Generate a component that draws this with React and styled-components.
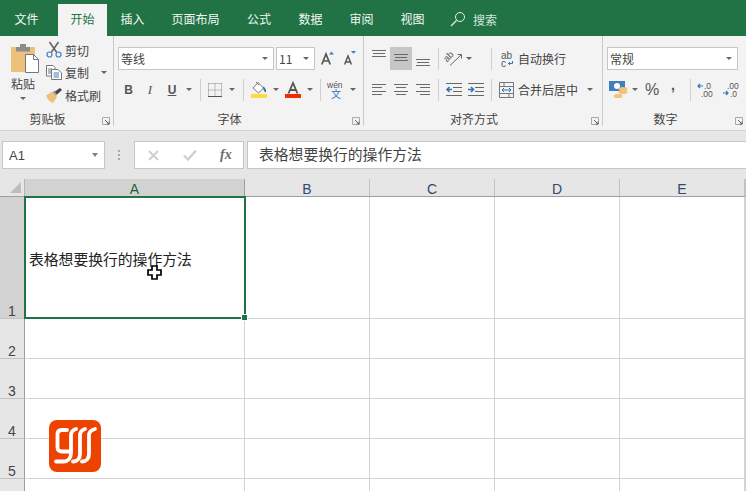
import React from "react";
import styled, { createGlobalStyle } from "styled-components";

const GlobalStyle = createGlobalStyle`
  html, body { margin: 0; padding: 0; background: #fff; }
  body { font-family: "Noto Sans CJK SC", "Liberation Sans", sans-serif; color: #333; }
  svg { overflow: visible; }
`;

const Page = styled.div`
  position: relative;
  width: 746px;
  height: 491px;
  overflow: hidden;
`;

/* title bar + tabs */
const TabBar = styled.div`
  display: flex;
  align-items: flex-end;
  height: 36px;
  padding-left: 1px;
  background: #217346;
`;

const Tab = styled.div`
  height: 32px;
  line-height: 30px;
  font-size: 12px;
  width: ${(p) => p.$w}px;
  text-align: center;
  padding-right: ${(p) => p.$pr || 0}px;
  box-sizing: border-box;
  color: ${(p) => (p.$active ? "#217346" : "#f4f8f5")};
  background: ${(p) => (p.$active ? "#f3f3f3" : "transparent")};
`;

const Search = styled.div`
  display: flex;
  align-items: center;
  gap: 7px;
  height: 32px;
  margin-left: 12px;
  font-size: 12px;
  color: #d6e6dc;
  padding-bottom: 2px;
  box-sizing: border-box;
`;

/* ribbon */
const Ribbon = styled.div`
  display: flex;
  height: 94px;
  background: #f3f3f3;
  border-bottom: 1px solid #d2d2d2;
`;

const Group = styled.div`
  position: relative;
  display: flex;
  flex-direction: column;
  width: ${(p) => p.$w}px;
  padding: 4px 0 0 ${(p) => p.$pad || 0}px;
  box-sizing: border-box;
  border-right: ${(p) => (p.$last ? "none" : "1px solid #c9c9c9")};
  margin-bottom: 4px;
`;

const GroupLabel = styled.div`
  position: absolute;
  left: 0;
  right: 18px;
  bottom: -1px;
  text-align: center;
  font-size: 12px;
  line-height: 16px;
  color: #444;
`;

const Launcher = styled.svg`
  position: absolute;
  right: 3px;
  bottom: 1px;
  width: 8px;
  height: 8px;
`;

const ToolRow = styled.div`
  display: flex;
  align-items: center;
  height: 23px;
  margin-top: ${(p) => p.$mt || 0}px;
`;

const Slot = styled.div`
  display: flex;
  align-items: center;
  justify-content: ${(p) => (p.$end ? "flex-end" : "center")};
  flex: none;
  width: ${(p) => p.$w}px;
  height: 23px;
  background: ${(p) => (p.$on ? "#c6c6c6" : "transparent")};
`;

const Divider = styled.div`
  flex: none;
  width: 1px;
  height: 22px;
  margin: 0 ${(p) => p.$m || 0}px;
  background: #d0d0d0;
`;

const Caret = styled.div`
  flex: none;
  width: 0;
  height: 0;
  margin: ${(p) => p.$m || "0"};
  border-left: ${(p) => (p.$big ? 3.5 : 3)}px solid transparent;
  border-right: ${(p) => (p.$big ? 3.5 : 3)}px solid transparent;
  border-top: ${(p) => (p.$big ? 4 : 3)}px solid ${(p) => (p.$big ? "#808080" : "#666")};
`;

const SelectBox = styled.div`
  display: flex;
  align-items: center;
  justify-content: space-between;
  flex: none;
  box-sizing: border-box;
  width: ${(p) => p.$w}px;
  height: 23px;
  margin-right: ${(p) => p.$mr || 0}px;
  padding: 0 5px 0 2px;
  background: #fff;
  border: 1px solid #c6c6c6;
  font-size: 12px;
  color: #444;
`;

const ClipRow = styled.div`
  display: flex;
  gap: 8px;
`;

const PasteCol = styled.div`
  display: flex;
  flex-direction: column;
  align-items: center;
  width: 30px;
  padding-top: 4px;
  font-size: 12px;
  line-height: 16px;
  color: #444;
`;

const PasteLabel = styled.span`
  margin-top: 3px;
`;

const ClipList = styled.div`
  display: flex;
  flex-direction: column;
  margin-top: -1px;
`;

const ClipItem = styled.div`
  display: flex;
  align-items: center;
  gap: 3px;
  height: 22.5px;
  font-size: 12px;
  color: #444;
`;

const ToolText = styled.span`
  margin-left: 4px;
  font-size: 12px;
  color: #444;
  white-space: nowrap;
`;

const Letter = styled.span`
  font-family: ${(p) => (p.$serif ? '"Liberation Serif", serif' : '"Liberation Sans", sans-serif')};
  font-size: ${(p) => p.$size || 12}px;
  font-weight: ${(p) => (p.$bold ? 700 : 400)};
  font-style: ${(p) => (p.$italic ? "italic" : "normal")};
  text-decoration: ${(p) => (p.$under ? "underline" : "none")};
  color: #555;
  line-height: 1;
`;

const Comma = styled(Letter)`
  padding-bottom: 9px;
`;

/* formula bar */
const FormulaBar = styled.div`
  display: flex;
  align-items: center;
  height: 48px;
  padding: 0 0 0 2px;
  box-sizing: border-box;
  background: #e6e6e6;
`;

const NameBox = styled.div`
  display: flex;
  align-items: center;
  justify-content: space-between;
  box-sizing: border-box;
  width: 103px;
  height: 28px;
  padding: 0 6px 0 6px;
  background: #fff;
  border: 1px solid #c6c6c6;
  font-family: "Liberation Sans", sans-serif;
  font-size: 13px;
  color: #444;
`;

const Grip = styled.div`
  flex: none;
  width: 2px;
  height: 10px;
  margin: 0 14px 0 13px;
  background: repeating-linear-gradient(#aaa 0 2px, transparent 2px 4px);
`;

const FxBox = styled.div`
  display: flex;
  align-items: center;
  box-sizing: border-box;
  width: 110px;
  height: 28px;
  margin-right: 3px;
  padding-left: 13px;
  gap: 24px;
  background: #fff;
  border: 1px solid #c6c6c6;
`;

const FxLetter = styled(Letter)`
  margin-left: -1px;
  font-weight: 700;
  color: #6a6a6a;
`;

const FormulaInput = styled.div`
  flex: 1;
  box-sizing: border-box;
  height: 28px;
  padding-left: 11px;
  line-height: 24px;
  font-size: 14.8px;
  color: #444;
  background: #fff;
  border: 1px solid #c6c6c6;
  border-right: none;
`;

/* sheet */
const Sheet = styled.div`
  display: grid;
  grid-template-columns: 25px 220px repeat(4, 125px) 1fr;
  grid-template-rows: 18px 122px repeat(5, 40px);
  background: #fff;
`;

const Corner = styled.div`
  position: relative;
  background: #e6e6e6;
  border-right: 1px solid #b5b5b5;
  border-bottom: 1px solid #9e9e9e;
  box-sizing: border-box;
  &::after {
    content: "";
    position: absolute;
    right: 3px;
    bottom: 3px;
    border-left: 11px solid transparent;
    border-bottom: 11px solid #bdbdbd;
  }
`;

const ColHead = styled.div`
  box-sizing: border-box;
  text-align: center;
  font-family: "Liberation Sans", sans-serif;
  font-size: 14px;
  line-height: 21px;
  color: ${(p) => (p.$on ? "#1f5e3a" : "#2f4a6a")};
  background: ${(p) => (p.$on ? "#d2d2d2" : "#e6e6e6")};
  border-right: 1px solid ${(p) => (p.$on ? "#9e9e9e" : "#c2c2c2")};
  border-bottom: 1px solid #9e9e9e;
  overflow: hidden;
`;

const RowHead = styled.div`
  display: flex;
  align-items: flex-end;
  justify-content: center;
  box-sizing: border-box;
  font-family: "Liberation Sans", sans-serif;
  font-size: 14px;
  line-height: 14px;
  color: #444;
  background: ${(p) => (p.$on ? "#d2d2d2" : "#e6e6e6")};
  border-right: 1px solid #9e9e9e;
  border-bottom: 1px solid #c2c2c2;
`;

const Cell = styled.div`
  box-sizing: border-box;
  border-right: 1px solid #d4d4d4;
  border-bottom: 1px solid #d4d4d4;
`;

const ActiveCell = styled.div`
  position: relative;
  display: flex;
  align-items: flex-end;
  box-sizing: border-box;
  margin: -1px 0 0 -1px;
  width: 222px;
  height: 123px;
  padding: 0 0 47px 3px;
  font-size: 14.8px;
  line-height: 22px;
  color: #222;
  white-space: nowrap;
  border: 2px solid #217346;
  background: #fff;
  z-index: 2;
  &::after {
    content: "";
    position: absolute;
    right: -4px;
    bottom: -4px;
    width: 5px;
    height: 5px;
    background: #217346;
    border: 1px solid #fff;
  }
`;

const Pointer = styled.svg`
  position: absolute;
  left: 147px;
  top: 265px;
  z-index: 3;
`;

const Logo = styled.svg`
  position: absolute;
  left: 49px;
  top: 420px;
  z-index: 3;
`;

const LauncherIcon = () => (
  <Launcher viewBox="0 0 8 8">
    <path d="M.5 .5H7.5V7.5H.5Z" fill="none" stroke="#aaa" />
    <path d="M3 3L7 7M4.5 7H7V4.5" fill="none" stroke="#666" />
  </Launcher>
);

const Lines = ({ rows }) => (
  <svg width="22" height="21" viewBox="0 0 22 21">
    {rows.map(([x1, x2, y], i) => (
      <path key={i} d={`M${x1} ${y}H${x2}`} stroke="#6a6a6a" strokeWidth="1" />
    ))}
  </svg>
);

const PasteIcon = () => (
  <svg width="28" height="29" viewBox="0 0 28 29" style={{ marginLeft: 4 }}>
    <path d="M0 3H24V28H0Z" fill="#edc17c" />
    <path d="M5 3H19V7.5H5Z" fill="#8c8c8c" />
    <path d="M9 0H15V4H9Z" fill="#8c8c8c" />
    <path d="M14.5 10.5H22.5L27.5 15.5V28.5H14.5Z" fill="#fff" stroke="#777" />
    <path d="M22.5 10.5V15.5H27.5" fill="none" stroke="#777" />
  </svg>
);

const ScissorsIcon = () => (
  <svg width="16" height="16" viewBox="0 0 16 16" fill="none">
    <path d="M3.5 0L10.5 10M12.5 0L5.5 10" stroke="#666" strokeWidth="1.6" />
    <circle cx="3.5" cy="12.5" r="2.5" stroke="#3f7fbf" strokeWidth="1.2" />
    <circle cx="12.5" cy="12.5" r="2.5" stroke="#3f7fbf" strokeWidth="1.2" />
  </svg>
);

const CopyIcon = () => (
  <svg width="16" height="15" viewBox="0 0 16 15" fill="none">
    <path d="M.5 .5H7L9 2.5V11H.5Z" fill="#fff" stroke="#777" />
    <path d="M2 4H6M2 6H6M2 8H6" stroke="#777" />
    <path d="M5.5 4.5H12L15.5 8V14.5H5.5Z" fill="#fff" stroke="#777" />
    <path d="M7.5 8H13M7.5 10H13M7.5 12H13" stroke="#3f7fbf" />
  </svg>
);

const BrushIcon = () => (
  <svg width="16" height="15" viewBox="0 0 16 15">
    <path d="M0 7.5L6 3.5L11 9L7 15C4 14 1 11 0 7.5Z" fill="#edc17c" />
    <path d="M6.5 4L9 2.5L11.5 5.5L10 8Z" fill="#999" />
    <path d="M9 3.5L14 0L16 2L11 6.5Z" fill="#444" />
  </svg>
);

const BorderIcon = () => (
  <svg width="14" height="14" viewBox="0 0 14 14" fill="none">
    <path d="M.5 .5H13.5M.5 7H13.5M.5 .5V13.5M7 .5V13.5M13.5 .5V13.5" stroke="#888" strokeDasharray="1 1" />
    <path d="M0 13.5H14" stroke="#555" />
  </svg>
);

const FillIcon = () => (
  <svg width="16" height="17" viewBox="0 0 16 17">
    <path d="M7 1.5L12.5 7L7.5 12L2 7Z" fill="#fff" stroke="#777" />
    <path d="M5 1L8 4" stroke="#777" />
    <path d="M12 5.5C14.5 6.5 15.5 9 15 11.5C13.5 11.5 12.5 9 12 7Z" fill="#2f75b5" />
    <path d="M0 13H16V17H0Z" fill="#fadc3f" />
  </svg>
);

const FontColorIcon = () => (
  <svg width="16" height="17" viewBox="0 0 16 17" fill="none">
    <path d="M3.5 12.5L8 2L12.5 12.5M5.5 9H10.5" stroke="#555" strokeWidth="1.8" />
    <path d="M0 13H16V17H0Z" fill="#f02c00" />
  </svg>
);

const GrowIcon = ({ up }) => (
  <svg width="16" height="17" viewBox="0 0 16 17" fill="none">
    <path
      d={up ? "M.8 14.5L5 4L9.2 14.5M2.2 11H7.8" : "M1.6 14.5L5 6L8.4 14.5M3 12H7"}
      stroke="#555"
      strokeWidth={up ? 1.7 : 1.4}
    />
    <path d={up ? "M8 4.5L10.5 1.5L13 4.5Z" : "M8 1H13L10.5 3.8Z"} fill="#3f7fbf" />
  </svg>
);

const OrientIcon = () => (
  <svg width="18" height="17" viewBox="0 0 18 17" fill="none">
    <text x="0" y="10" transform="rotate(-45 4 9)" fontFamily="Liberation Sans" fontSize="9.5" fill="#555">ab</text>
    <path d="M5 15.5L16 5M12.5 4.5H16.5V8.5" stroke="#666" />
  </svg>
);

const IndentIcon = ({ right }) => (
  <svg width="16" height="13" viewBox="0 0 16 13" fill="none">
    <path d="M0 .5H16M7 4.5H16M7 8.5H16M0 12.5H16" stroke="#666" />
    <path d={right ? "M0 6.5H5M3 4L5.5 6.5L3 9" : "M6 6.5H1M3.5 4L1 6.5L3.5 9"} stroke="#2f75b5" strokeWidth="1.6" />
  </svg>
);

const WrapIcon = () => (
  <svg width="13" height="16" viewBox="0 0 13 16" fill="none">
    <text x="0" y="7.5" fontFamily="Liberation Sans" fontSize="10" fill="#555">ab</text>
    <text x="0" y="15.5" fontFamily="Liberation Sans" fontSize="10" fill="#555">c</text>
    <path d="M11.5 10V12.5H7.5M9 11L7.5 12.5L9 14" stroke="#2f75b5" />
  </svg>
);

const MergeIcon = () => (
  <svg width="15" height="16" viewBox="0 0 15 16" fill="none">
    <path d="M.5 .5H14.5V15.5H.5ZM.5 4.5H14.5M.5 11.5H14.5M5 .5V4.5M10 11.5V15.5" stroke="#777" />
    <path d="M3 8H12M5 6L3 8L5 10M10 6L12 8L10 10" stroke="#2f75b5" />
  </svg>
);

const CurrencyIcon = () => (
  <svg width="19" height="17" viewBox="0 0 19 17">
    <path d="M0 0H16V10H0Z" fill="#3f7fbf" />
    <circle cx="8" cy="5" r="3" fill="#fff" />
    <ellipse cx="14" cy="8" rx="4.5" ry="2" fill="#f1c27a" />
    <ellipse cx="14" cy="11" rx="4.5" ry="2" fill="#f1c27a" />
    <ellipse cx="9" cy="15" rx="4.5" ry="2" fill="#f1c27a" />
  </svg>
);

const DecimalIcon = ({ more }) => (
  <svg width="18" height="15" viewBox="0 0 18 15" fill="none">
    <text x={more ? 7 : 5} y="7" fontFamily="Liberation Sans" fontSize="8.5" fill="#555">{more ? ".0" : ".00"}</text>
    <text x={more ? 4 : 8} y="14.5" fontFamily="Liberation Sans" fontSize="8.5" fill="#555">{more ? ".00" : ".0"}</text>
    {more ? (
      <path d="M6 4H1M3 2L1 4L3 6" stroke="#2f75b5" strokeWidth="1.2" />
    ) : (
      <path d="M1 11H6M4 9L6 11L4 13" stroke="#2f75b5" strokeWidth="1.2" />
    )}
  </svg>
);

const tabs = [
  ["文件", 57, false, 6],
  ["开始", 49, true],
  ["插入", 51],
  ["页面布局", 75],
  ["公式", 52],
  ["数据", 51],
  ["审阅", 51],
  ["视图", 51],
];

const columns = ["B", "C", "D", "E"];

export default function App() {
  return (
    <Page>
      <GlobalStyle />
      <TabBar>
        {tabs.map(([name, w, active, pr]) => (
          <Tab key={name} $w={w} $active={active} $pr={pr}>{name}</Tab>
        ))}
        <Search>
          <svg width="16" height="16" viewBox="0 0 16 16" fill="none">
            <circle cx="10" cy="6" r="4.5" stroke="#e4efe8" />
            <path d="M6.5 9.5L1 15" stroke="#e4efe8" strokeWidth="1.3" />
          </svg>
          搜索
        </Search>
      </TabBar>

      <Ribbon>
        <Group $w={114} $pad={8}>
          <ClipRow>
            <PasteCol>
              <PasteIcon />
              <PasteLabel>粘贴</PasteLabel>
              <Caret $m="5px 0 0" />
            </PasteCol>
            <ClipList>
              <ClipItem><ScissorsIcon />剪切</ClipItem>
              <ClipItem><CopyIcon />复制<Caret $m="0 0 0 9px" /></ClipItem>
              <ClipItem><BrushIcon />格式刷</ClipItem>
            </ClipList>
          </ClipRow>
          <GroupLabel>剪贴板</GroupLabel>
          <LauncherIcon />
        </Group>

        <Group $w={250} $pad={4}>
          <ToolRow $mt={7}>
            <SelectBox $w={156} $mr={2}>等线<Caret /></SelectBox>
            <SelectBox $w={39} $mr={4}>11<Caret /></SelectBox>
            <Slot $w={20}><GrowIcon up /></Slot>
            <Slot $w={24}><GrowIcon /></Slot>
          </ToolRow>
          <ToolRow $mt={8}>
            <Slot $w={21}><Letter $bold>B</Letter></Slot>
            <Slot $w={22}><Letter $italic $serif $size={13}>I</Letter></Slot>
            <Slot $w={22}><Letter $bold $under>U</Letter></Slot>
            <Caret $m="0 8px 0 3px" />
            <Divider />
            <Slot $w={28}><BorderIcon /></Slot>
            <Caret $m="0 8px 0 0" />
            <Divider />
            <Slot $w={29}><FillIcon /></Slot>
            <Caret />
            <Slot $w={28}><FontColorIcon /></Slot>
            <Caret $m="0 7px 0 0" />
            <Divider />
            <Slot $w={29}>
              <svg width="20" height="19" viewBox="0 0 20 19">
                <text x="1" y="8" fontFamily="Liberation Sans" fontSize="8.5" fill="#555">wén</text>
                <text x="5" y="18" fontFamily="Noto Sans CJK SC" fontSize="10" fill="#2f75b5">文</text>
              </svg>
            </Slot>
            <Caret />
          </ToolRow>
          <GroupLabel>字体</GroupLabel>
          <LauncherIcon />
        </Group>

        <Group $w={239} $pad={4}>
          <ToolRow $mt={7}>
            <Slot $w={22}><Lines rows={[[4, 18, 2.5], [5, 17, 5.5], [4, 18, 8.5]]} /></Slot>
            <Slot $w={22} $on><Lines rows={[[4, 18, 6.5], [5, 17, 9.5], [4, 18, 12.5]]} /></Slot>
            <Slot $w={22}><Lines rows={[[4, 18, 11.5], [5, 17, 14.5], [4, 18, 17.5]]} /></Slot>
            <Divider $m={4} />
            <Slot $w={22}><OrientIcon /></Slot>
            <Caret $m="0 6px 0 1px" />
            <Slot $w={13} />
            <Divider />
            <Slot $w={22} $end><WrapIcon /></Slot>
            <ToolText>自动换行</ToolText>
          </ToolRow>
          <ToolRow $mt={8}>
            <Slot $w={22}><Lines rows={[[4, 18, 5.5], [4, 14, 8.5], [4, 18, 12.5], [4, 14, 15.5]]} /></Slot>
            <Slot $w={22}><Lines rows={[[4, 18, 5.5], [6, 16, 8.5], [4, 18, 12.5], [6, 16, 15.5]]} /></Slot>
            <Slot $w={22}><Lines rows={[[4, 18, 5.5], [8, 18, 8.5], [4, 18, 12.5], [8, 18, 15.5]]} /></Slot>
            <Divider $m={4} />
            <Slot $w={22}><IndentIcon /></Slot>
            <Slot $w={22}><IndentIcon right /></Slot>
            <Slot $w={4} />
            <Divider />
            <Slot $w={22} $end><MergeIcon /></Slot>
            <ToolText>合并后居中</ToolText>
            <Caret $m="0 0 0 9px" />
          </ToolRow>
          <GroupLabel>对齐方式</GroupLabel>
          <LauncherIcon />
        </Group>

        <Group $w={143} $pad={4} $last>
          <ToolRow $mt={7}>
            <SelectBox $w={131}>常规<Caret /></SelectBox>
          </ToolRow>
          <ToolRow $mt={8}>
            <Slot $w={22}><CurrencyIcon /></Slot>
            <Caret $m="0 0 0 3px" />
            <Slot $w={28}><Letter $size={16}>%</Letter></Slot>
            <Slot $w={14}><Comma $bold $size={14}>,</Comma></Slot>
            <Slot $w={10} />
            <Divider />
            <Slot $w={30}><DecimalIcon more /></Slot>
            <Slot $w={20}><DecimalIcon /></Slot>
          </ToolRow>
          <GroupLabel>数字</GroupLabel>
          <LauncherIcon />
        </Group>
      </Ribbon>

      <FormulaBar>
        <NameBox>A1<Caret $big /></NameBox>
        <Grip />
        <FxBox>
          <svg width="11" height="11" viewBox="0 0 11 11" fill="none">
            <path d="M1 1L10 10M10 1L1 10" stroke="#d0d0d0" strokeWidth="2" />
          </svg>
          <svg width="14" height="12" viewBox="0 0 14 12" fill="none">
            <path d="M1 6.5L5 10.5L13 1.5" stroke="#d0d0d0" strokeWidth="2.4" />
          </svg>
          <FxLetter $serif $italic $size={14}>fx</FxLetter>
        </FxBox>
        <FormulaInput>表格想要换行的操作方法</FormulaInput>
      </FormulaBar>

      <Sheet>
        <Corner />
        <ColHead $on>A</ColHead>
        {columns.map((c) => <ColHead key={c}>{c}</ColHead>)}
        <ColHead />

        <RowHead $on>1</RowHead>
        <ActiveCell>表格想要换行的操作方法</ActiveCell>
        {columns.map((c) => <Cell key={c} />)}
        <Cell />

        {[2, 3, 4, 5, ""].map((n) => (
          <React.Fragment key={n}>
            <RowHead>{n}</RowHead>
            <Cell />
            {columns.map((c) => <Cell key={c} />)}
            <Cell />
          </React.Fragment>
        ))}
      </Sheet>

      <Pointer width="15" height="15" viewBox="0 0 15 15">
        <path d="M5 1H10V5H14V10H10V14H5V10H1V5H5Z" fill="#fff" stroke="#000" strokeWidth="1.7" />
      </Pointer>

      <Logo width="52" height="52" viewBox="0 0 52 52" fill="none">
        <rect width="52" height="52" rx="8" fill="#ee4200" />
        <g stroke="#fff" strokeWidth="3.8" strokeLinecap="round">
          <path d="M18 10H13C10 10 8.5 11.5 8.5 14.5V27C8.5 30 10 31.5 13 31.5H20" />
          <path d="M27 9C23.5 10 22 12 22 15.5V33C22 38 19 41.5 15 41.5H7" />
          <path d="M36 9C32.5 10 31 12 31 15.5V34C31 38 28.5 41.5 24 41.5" />
          <path d="M46 9C42 10 40 12 40 15.5V34C40 38 37.5 41.5 33 41.5" />
        </g>
      </Logo>
    </Page>
  );
}
